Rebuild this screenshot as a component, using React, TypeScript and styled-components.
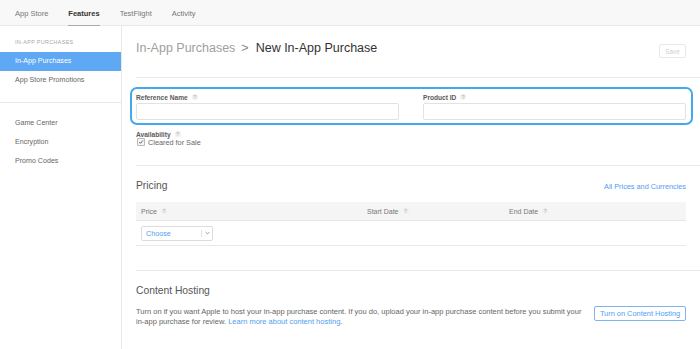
import React from 'react';
import styled, { createGlobalStyle } from 'styled-components';

const GlobalStyle = createGlobalStyle`
  html, body {
    margin: 0;
    padding: 0;
    background: #ffffff;
  }

  body {
    font-family: "Liberation Sans", Arial, sans-serif;
    color: #555555;
    -webkit-font-smoothing: antialiased;
  }

  * {
    box-sizing: border-box;
  }
`;

const tabs = ['App Store', 'Features', 'TestFlight', 'Activity'];

const sideTop = ['In-App Purchases', 'App Store Promotions'];
const sideBottom = ['Game Center', 'Encryption', 'Promo Codes'];

const Help: React.FC = () => <HelpBadge>?</HelpBadge>;

const App: React.FC = () => {
	return (
		<>
			<GlobalStyle/>
			<Page>
				<TopNav>
					{tabs.map(t => (
						<Tab key={t} active={t === 'Features'}>{t}</Tab>
					))}
				</TopNav>

				<Body>
					<Sidebar>
						<SideGroup>
							<SectionLabel>IN-APP PURCHASES</SectionLabel>
							{sideTop.map((item, i) => (
								<SideItem key={item} active={i === 0}>{item}</SideItem>
							))}
						</SideGroup>
						<SideGroup>
							{sideBottom.map(item => (
								<SideItem key={item}>{item}</SideItem>
							))}
						</SideGroup>
					</Sidebar>

					<Main>
						<Header>
							<Title>
								<Crumb>In-App Purchases</Crumb>
								<Chevron>&gt;</Chevron>
								New In-App Purchase
							</Title>
							<SaveButton disabled>Save</SaveButton>
						</Header>

						<Section bottom={19}>
							<Highlight>
								<FieldGrid>
									<Field>
										<Label>Reference Name <Help/></Label>
										<Input/>
									</Field>
									<Field>
										<Label>Product ID <Help/></Label>
										<Input/>
									</Field>
								</FieldGrid>
							</Highlight>

							<Availability>
								<Label>Availability <Help/></Label>
								<CheckRow>
									<CheckBox>
										<svg width="8" height="8" viewBox="0 0 8 8">
											<path d="M1.6 4.1 L3.3 5.8 L6.6 1.9" fill="none" stroke="#444" strokeWidth="1.1"/>
										</svg>
									</CheckBox>
									Cleared for Sale
								</CheckRow>
							</Availability>
						</Section>

						<Section top={14} bottom={24}>
							<SectionHead>
								<SectionTitle>Pricing</SectionTitle>
								<Link>All Prices and Currencies</Link>
							</SectionHead>

							<Table>
								<TableRow head>
									<Cell>Price <Help/></Cell>
									<Cell>Start Date <Help/></Cell>
									<Cell>End Date <Help/></Cell>
								</TableRow>
								<TableRow>
									<Cell>
										<Select>
											<SelectValue>Choose</SelectValue>
											<SelectArrow>
												<svg width="5" height="4" viewBox="0 0 5 4">
													<path d="M0.6 1 L2.5 2.9 L4.4 1" fill="none" stroke="#888" strokeWidth="0.8"/>
												</svg>
											</SelectArrow>
										</Select>
									</Cell>
									<Cell/>
									<Cell/>
								</TableRow>
							</Table>
						</Section>

						<Section top={14} last>
							<SectionTitle>Content Hosting</SectionTitle>
							<HostingRow>
								<Description>
									Turn on if you want Apple to host your in-app purchase content. If you do, upload your in-app purchase content before you submit your<br/>
									in-app purchase for review. <Link>Learn more about content hosting</Link>.
								</Description>
								<OutlineButton>Turn on Content Hosting</OutlineButton>
							</HostingRow>
						</Section>
					</Main>
				</Body>
			</Page>
		</>
	);
};

export default App;


const Page = styled.div`
  width: 700px;
  height: 349px;
  display: flex;
  flex-direction: column;
  overflow: hidden;
`;

const TopNav = styled.nav`
  height: 26px;
  flex-shrink: 0;
  display: flex;
  align-items: stretch;
  gap: 20px;
  padding-left: 15px;
  background: #f8f8f8;
  border-bottom: 1px solid #e8e8e8;
`;

const Tab = styled.div<{ active?: boolean }>`
  display: flex;
  align-items: center;
  font-size: 7.5px;
  color: ${p => (p.active ? '#333333' : '#777777')};
  font-weight: ${p => (p.active ? 700 : 400)};
  border-bottom: 1px solid ${p => (p.active ? '#a8a8a8' : 'transparent')};
  margin-bottom: -1px;
  padding-top: 1px;
`;

const Body = styled.div`
  flex: 1;
  display: flex;
  min-height: 0;
`;

const Sidebar = styled.aside`
  width: 122px;
  flex-shrink: 0;
  border-right: 1px solid #e8e8e8;
`;

const SideGroup = styled.div`
  padding: 12px 0 12px;
  border-bottom: 1px solid #e8e8e8;

  &:last-child {
    padding-top: 11px;
    border-bottom: none;
  }
`;

const SectionLabel = styled.div`
  height: 8px;
  line-height: 8px;
  padding-left: 15px;
  margin-bottom: 6px;
  font-size: 5.4px;
  letter-spacing: 0.35px;
  color: #a8a8a8;
`;

const SideItem = styled.div<{ active?: boolean }>`
  height: 19px;
  line-height: 19px;
  padding-left: 15px;
  font-size: 7.1px;
  color: ${p => (p.active ? '#ffffff' : '#666666')};
  background: ${p => (p.active ? '#5ea8f4' : 'transparent')};
`;

const Main = styled.main`
  flex: 1;
  min-width: 0;
  padding-left: 14px;
`;

const Header = styled.div`
  height: 52px;
  display: flex;
  justify-content: space-between;
  align-items: flex-start;
  padding: 14px 14px 0 0;
  border-bottom: 1px solid #e8e8e8;
`;

const Title = styled.h1`
  margin: 0;
  font-size: 12.5px;
  line-height: 16px;
  font-weight: 400;
  color: #333333;
`;

const Crumb = styled.span`
  color: #a0a0a0;
`;

const Chevron = styled.span`
  color: #888888;
  margin: 0 7px 0 6px;
`;

const SaveButton = styled.button`
  margin-top: 4px;
  width: 27px;
  height: 14px;
  padding: 0;
  font-family: inherit;
  font-size: 6.4px;
  color: #d0d0d0;
  background: #ffffff;
  border: 1px solid #e8e8e8;
  border-radius: 2px;
`;

const Section = styled.section<{ top?: number; bottom?: number; last?: boolean }>`
  padding: ${p => `${p.top ?? 9}px 14px ${p.bottom ?? 0}px 0`};
  border-bottom: ${p => (p.last ? 'none' : '1px solid #e8e8e8')};
`;

const Highlight = styled.div`
  margin: 0 -7px 0 -6px;
  padding: 4px 5px 3px 4px;
  border: 2px solid #44a9ea;
  border-radius: 7px;
`;

const FieldGrid = styled.div`
  display: grid;
  grid-template-columns: 1fr 1fr;
  gap: 24px;
`;

const Field = styled.div`
  display: flex;
  flex-direction: column;
  gap: 2px;
`;

const Label = styled.div`
  display: flex;
  align-items: center;
  gap: 4px;
  height: 8px;
  font-size: 6.6px;
  font-weight: 700;
  color: #5a5a5a;
`;

const HelpBadge = styled.span`
  display: inline-flex;
  align-items: center;
  justify-content: center;
  width: 6px;
  height: 6px;
  border-radius: 50%;
  background: #eeeeee;
  color: #a8a8a8;
  font-size: 4.6px;
  font-weight: 400;
`;

const Input = styled.div`
  height: 17px;
  border: 1px solid #e2e2e2;
  border-radius: 2px;
  background: #ffffff;
`;

const Availability = styled.div`
  margin-top: 5px;
`;

const CheckRow = styled.label`
  display: flex;
  align-items: center;
  gap: 3px;
  height: 8px;
  padding-left: 1px;
  font-size: 7.3px;
  color: #666666;
`;

const CheckBox = styled.span`
  display: inline-flex;
  align-items: center;
  justify-content: center;
  width: 8px;
  height: 8px;
  border: 1px solid #b8b8b8;
  border-radius: 1px;
  background: #f6f6f6;
`;

const SectionHead = styled.div`
  display: flex;
  justify-content: space-between;
  align-items: center;
`;

const SectionTitle = styled.h2`
  margin: 0;
  font-size: 10.3px;
  line-height: 12px;
  font-weight: 400;
  color: #555555;
`;

const Link = styled.a`
  color: #4f9ef0;
  font-size: inherit;
  text-decoration: none;

  ${SectionHead} & {
    font-size: 7.3px;
  }
`;

const Table = styled.div`
  margin-top: 10px;
`;

const TableRow = styled.div<{ head?: boolean }>`
  display: grid;
  grid-template-columns: 226px 142px 1fr;
  align-items: center;
  padding-left: 5px;
  height: ${p => (p.head ? '19px' : '25px')};
  background: ${p => (p.head ? '#f5f5f5' : 'transparent')};
  border-bottom: 1px solid #e8e8e8;
`;

const Cell = styled.div`
  display: flex;
  align-items: center;
  gap: 4px;
  font-size: 7px;
  color: #777777;
`;

const Select = styled.div`
  display: flex;
  align-items: center;
  width: 72px;
  height: 15px;
  border: 1px solid #dcdcdc;
  border-radius: 2px;
  background: #ffffff;
`;

const SelectValue = styled.span`
  flex: 1;
  padding-left: 4px;
  font-size: 7.2px;
  color: #4f9ef0;
`;

const SelectArrow = styled.span`
  display: flex;
  align-items: center;
  justify-content: center;
  width: 11px;
  height: 7px;
  border-left: 1px solid #e2e2e2;
`;

const HostingRow = styled.div`
  display: flex;
  justify-content: space-between;
  align-items: flex-start;
  margin-top: 10px;
`;

const Description = styled.p`
  margin: 0;
  font-size: 7.5px;
  line-height: 10px;
  color: #666666;
  white-space: nowrap;
`;

const OutlineButton = styled.button`
  margin-top: -1px;
  width: 92px;
  height: 15px;
  padding: 0;
  font-family: inherit;
  font-size: 7.4px;
  color: #4f9ef0;
  background: #ffffff;
  border: 1px solid #7db5f3;
  border-radius: 2px;
`;
